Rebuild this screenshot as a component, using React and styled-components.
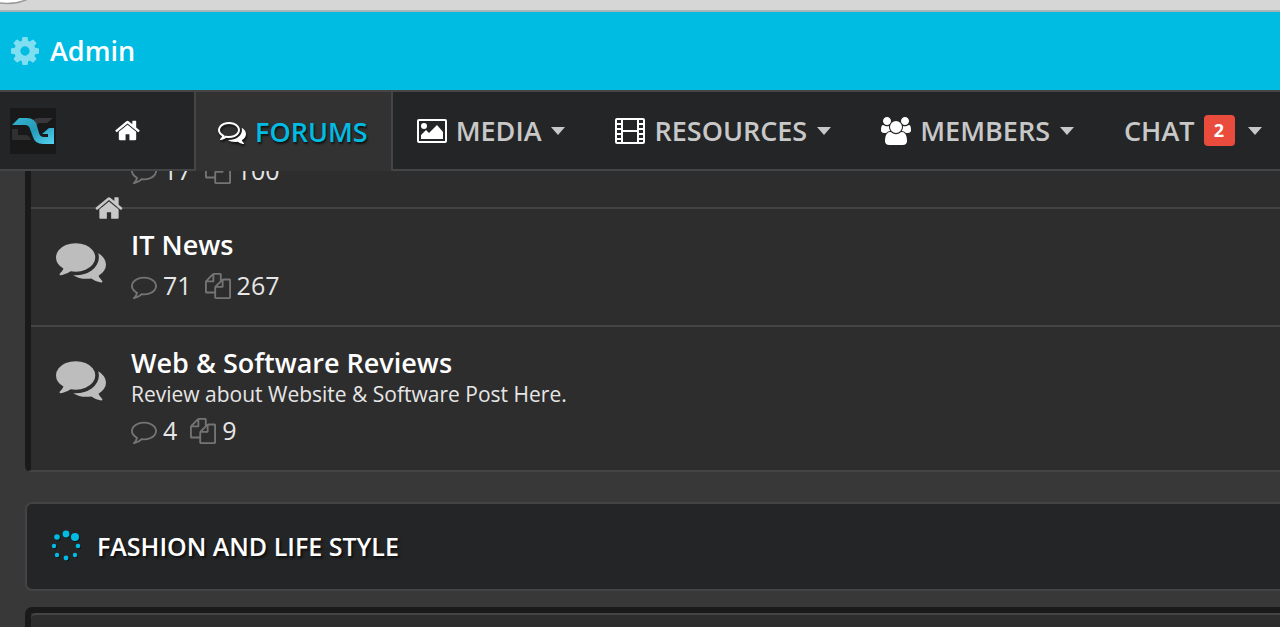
import styled, { createGlobalStyle, css } from "styled-components";

const GlobalStyle = createGlobalStyle`
  * {
    box-sizing: border-box;
  }

  body {
    margin: 0;
    background: #383838;
    color: #e6e6e6;
    font-family: "Open Sans", "Noto Sans", sans-serif;
  }

  a {
    color: inherit;
    text-decoration: none;
  }
`;

const BrowserEdge = styled.div`
  height: 12px;
  overflow: hidden;
  background: #d6d6d6;
  border-bottom: 2px solid #a9b4b7;

  svg {
    display: block;
  }
`;

const AdminBar = styled.header`
  display: flex;
  align-items: center;
  height: 78px;
  padding: 0 11px;
  background: #00bce3;
  color: #fff;
`;

const AdminLink = styled.a`
  display: flex;
  align-items: center;
  gap: 11px;
  font-size: 27px;
  font-weight: 600;
  line-height: 36px;
`;

const Nav = styled.nav`
  display: flex;
  height: 81px;
  background: #242527;
  border-top: 2px solid #454545;
  border-bottom: 2px solid #444546;
  white-space: nowrap;
`;

const LogoLink = styled.a`
  display: flex;
  align-items: center;
  padding: 0 33px 0 10px;
`;

const NavItem = styled.a`
  display: flex;
  align-items: center;
  gap: 9px;
  padding: 0 26px 0 24px;
  color: #c8c8c8;
  font-size: 27px;
  font-weight: 600;

  ${props => props.$home && css`
    padding: 0 53px 0 25px;
  `}

  ${props => props.$active && css`
    margin-bottom: -2px;
    padding: 0 23px 0 22px;
    background: #323232;
    border: solid #444546;
    border-width: 0 2px;
    color: #00bce3;
    text-shadow: 1px 2px 2px #111;

    svg {
      filter: drop-shadow(1px 2px 1px #111);
    }
  `}
`;

const Caret = styled.span`
  margin-left: 1px;
  border: 7px solid transparent;
  border-top: 8px solid #c8c8c8;
  border-bottom: 0;
`;

const ChatBadge = styled.span`
  width: 31px;
  margin-right: 3px;
  border-radius: 4px;
  background: #e94b3c;
  color: #fff;
  font-size: 18px;
  font-weight: 700;
  line-height: 31px;
  text-align: center;
`;

const Icon = styled.svg`
  flex: none;
  width: ${props => props.$width || 28}px;
  height: ${props => props.$height || 28}px;
  fill: ${props => props.$color || "#fff"};
`;

const Content = styled.main`
  position: relative;
  padding-left: 25px;
`;

const Crumb = styled.a`
  position: absolute;
  top: 22px;
  left: 94px;
  display: flex;
`;

const ForumList = styled.section`
  border-left: 6px solid #1a1a1a;
  border-bottom: 2px solid #444;
  border-bottom-left-radius: 6px;
  background: #2d2d2d;
`;

const ForumRow = styled.article`
  display: flex;
  gap: 25px;
  padding: 18px 25px 21px;

  & + & {
    border-top: 2px solid #444;
  }

  ${props => props.$scrolled && css`
    align-items: flex-end;
    height: 35px;
    padding-bottom: 18px;
    padding-left: 100px;
    overflow: hidden;
  `}
`;

const RowIcon = styled.div`
  padding-top: 9px;
`;

const ForumTitle = styled.h3`
  margin: 0;
  color: #fff;
  font-size: 27px;
  font-weight: 600;
  line-height: 36px;
`;

const Description = styled.p`
  margin: 0;
  font-size: 21px;
  line-height: 27px;
`;

const Stats = styled.div`
  display: flex;
  gap: 13px;
  padding-top: 4px;
  font-size: 25px;
  line-height: 37px;
`;

const Stat = styled.span`
  display: flex;
  align-items: center;
  gap: 6px;
`;

const Category = styled.section`
  display: flex;
  align-items: center;
  gap: 16px;
  height: 89px;
  margin: 30px 0 16px;
  padding: 0 24px 2px;
  border: 2px solid #444;
  border-right: 0;
  border-radius: 7px 0 0 7px;
  background: #242527;
`;

const CategoryTitle = styled.h2`
  margin: 0;
  color: #fff;
  font-size: 25px;
  font-weight: 600;
  text-shadow: 2px 2px 2px #111;
`;

const NextList = styled.section`
  border: solid #1a1a1a;
  border-width: 6px 0 0 6px;
  border-top-left-radius: 7px;
  background: #2d2d2d;

  &::before {
    content: "";
    display: block;
    height: 15px;
    border-top: 2px solid #444;
    border-top-left-radius: 5px;
  }
`;

const PATHS = {
  home: "M1472 992v480q0 26-19 45t-45 19h-384v-384h-256v384h-384q-26 0-45-19t-19-45v-480q0-1 .5-3t.5-3l575-474 575 474q1 2 1 6zm223-69l-62 74q-8 9-21 11h-3q-13 0-21-7l-692-577-692 577q-12 8-24 7-13-2-21-11l-62-74q-8-10-7-23.5t11-21.5l719-599q32-26 76-26t76 26l244 204v-195q0-14 9-23t23-9h192q14 0 23 9t9 23v408l219 182q10 8 11 21.5t-7 23.5z",
  cog: "M1152 896q0-106-75-181t-181-75-181 75-75 181 75 181 181 75 181-75 75-181zm512-109v222q0 12-8 23t-20 13l-185 28q-19 54-39 91 35 50 107 138 10 12 10 25t-9 23q-27 37-99 108t-94 71q-12 0-26-9l-138-108q-44 23-91 38-16 136-29 186-7 28-36 28h-222q-14 0-24.5-8.5t-11.5-21.5l-28-184q-49-16-90-37l-141 107q-10 9-25 9-14 0-25-11-126-114-165-168-7-10-7-23 0-12 8-23 15-21 51-66.5t54-70.5q-27-50-41-99l-183-27q-13-2-21-12.5t-8-23.5v-222q0-12 8-23t19-13l186-28q14-46 39-92-40-57-107-138-10-12-10-24 0-10 9-23 26-36 98.5-107.5t94.5-71.5q13 0 26 10l138 107q44-23 91-38 16-136 29-186 7-28 36-28h222q14 0 24.5 8.5t11.5 21.5l28 184q49 16 90 37l142-107q9-9 24-9 13 0 25 10 129 119 165 170 7 8 7 22 0 12-8 23-15 21-51 66.5t-54 70.5q26 50 41 98l183 28q13 2 21 12.5t8 23.5z",
  commentsOutline: "M704 384q-153 0-286 52t-211.5 141-78.5 191q0 82 53 158t149 132l97 56-35 84q34-20 62-39l44-31 53 10q78 14 153 14 153 0 286-52t211.5-141 78.5-191-78.5-191-211.5-141-286-52zm0-128q191 0 353.5 68.5t256.5 186.5 94 257-94 257-256.5 186.5-353.5 68.5q-86 0-176-16-124 88-278 128-36 9-86 16h-3q-11 0-20.5-8t-11.5-21q-1-3-1-6.5t.5-6.5 2-6l2.5-5 3.5-5.5 4-5 4.5-5 4-4.5q5-6 23-25t26-29.5 22.5-29 25-38.5 20.5-44q-124-72-195-177t-71-224q0-139 94-257t256.5-186.5 353.5-68.5zm822 1169q10 24 20.5 44t25 38.5 22.5 29 26 29.5 23 25q1 1 4 4.5t4.5 5 4 5 3.5 5.5l2.5 5 2 6 .5 6.5-1 6.5q-3 14-13 22t-22 7q-50-7-86-16-154-40-278-128-90 16-176 16-271 0-472-132 58 4 88 4 161 0 309-45t264-129q125-92 192-212t67-254q0-77-23-152 129 71 204 178t75 230q0 120-71 224.5t-195 176.5z",
  comments: "M1408 768q0 139-94 257t-256.5 186.5-353.5 68.5q-86 0-176-16-124 88-278 128-36 9-86 16h-3q-11 0-20.5-8t-11.5-21q-1-3-1-6.5t.5-6.5 2-6l2.5-5 3.5-5.5 4-5 4.5-5 4-4.5q5-6 23-25t26-29.5 22.5-29 25-38.5 20.5-44q-124-72-195-177t-71-224q0-139 94-257t256.5-186.5 353.5-68.5 353.5 68.5 256.5 186.5 94 257zm384 256q0 120-71 224.5t-195 176.5q10 24 20.5 44t25 38.5 22.5 29 26 29.5 23 25q1 1 4 4.5t4.5 5 4 5 3.5 5.5l2.5 5 2 6 .5 6.5-1 6.5q-3 14-13 22t-22 7q-50-7-86-16-154-40-278-128-90 16-176 16-271 0-472-132 58 4 88 4 161 0 309-45t264-129q125-92 192-212t67-254q0-77-23-152 129 71 204 178t75 230z",
  comment: "M896 384q-204 0-381.5 69.5t-282 187.5-104.5 255q0 112 71.5 213.5t201.5 175.5l87 50-27 96q-24 91-70 172 152-63 275-171l43-38 57 6q69 8 130 8 204 0 381.5-69.5t282-187.5 104.5-255-104.5-255-282-187.5-381.5-69.5zm896 512q0 174-120 321.5t-326 233-450 85.5q-70 0-145-8-198 175-460 242-49 14-114 22h-5q-15 0-27-10.5t-16-27.5v-1q-3-4-.5-12t2-10 4.5-9.5l6-9 7-8.5 8-9q7-8 31-34.5t34.5-38 31-39.5 32.5-51 27-59 26-76q-157-89-247.5-220t-90.5-281q0-174 120-321.5t326-233 450-85.5 450 85.5 326 233 120 321.5z",
  files: "M1696 384q40 0 68 28t28 68v1216q0 40-28 68t-68 28h-960q-40 0-68-28t-28-68v-288h-544q-40 0-68-28t-28-68v-672q0-40 20-88t48-76l408-408q28-28 76-48t88-20h416q40 0 68 28t28 68v328q68-40 128-40h416zm-544 213l-299 299h299v-299zm-640-384l-299 299h299v-299zm196 647l316-316v-416h-384v416q0 40-28 68t-68 28h-416v640h512v-256q0-40 20-88t48-76zm956 804v-1152h-384v416q0 40-28 68t-68 28h-416v640h896z",
  users: "M593 896q-162 5-265 128h-134q-82 0-138-40.5t-56-118.5q0-353 124-353 6 0 43.5 21t97.5 42.5 119 21.5q67 0 133-23-5 37-5 66 0 139 81 256zm1071 637q0 120-73 189.5t-194 69.5h-874q-121 0-194-69.5t-73-189.5q0-53 3.5-103.5t14-109 26.5-108.5 43-97.5 62-81 85.5-53.5 111.5-20q10 0 43 21.5t73 48 107 48 135 21.5 135-21.5 107-48 73-48 43-21.5q61 0 111.5 20t85.5 53.5 62 81 43 97.5 26.5 108.5 14 109 3.5 103.5zm-1024-1277q0 106-75 181t-181 75-181-75-75-181 75-181 181-75 181 75 75 181zm704 384q0 159-112.5 271.5t-271.5 112.5-271.5-112.5-112.5-271.5 112.5-271.5 271.5-112.5 271.5 112.5 112.5 271.5zm576 225q0 78-56 118.5t-138 40.5h-134q-103-123-265-128 81-117 81-256 0-29-5-66 66 23 133 23 59 0 119-21.5t97.5-42.5 43.5-21q124 0 124 353zm-128-609q0 106-75 181t-181 75-181-75-75-181 75-181 181-75 181 75 75 181z",
};

const VIEW_BOXES = {
  users: "0 0 1920 1792",
  cog: "128 128 1536 1536",
};

function Glyph({ name, size, width, color }) {
  return (
    <Icon
      viewBox={VIEW_BOXES[name] || "0 0 1792 1792"}
      $width={width || size}
      $height={size}
      $color={color}
      aria-hidden="true"
    >
      <path d={PATHS[name]} />
    </Icon>
  );
}

function Logo() {
  return (
    <Icon viewBox="0 0 46 46" $width={46} $height={46} role="img" aria-label="DG">
      <defs>
        <linearGradient id="logoBlue" x1="0" y1="0" x2="1" y2="1">
          <stop offset="0" stopColor="#35b4cf" />
          <stop offset="0.5" stopColor="#249bb9" />
          <stop offset="1" stopColor="#55d3f2" />
        </linearGradient>
      </defs>
      <rect width="46" height="46" fill="#19191a" />
      <path d="M2 21h6v6h8q3 0 5 5H2z" fill="#303031" />
      <path d="M43 10l-6 5h-7q-3 0-4 4l-1-3q-1-3-2-4 2-2 6-2z" fill="#38383a" />
      <path
        d="M2 17l7-7h8q8 0 10 8l2 7q1 4 5 4h4v-3h-6l7-6h5v16H33q-8 0-10-7l-3-8q-1-4-5-4z"
        fill="url(#logoBlue)"
      />
    </Icon>
  );
}

function PictureIcon() {
  return (
    <Icon viewBox="0 0 30 26" $width={30} $height={26} aria-hidden="true">
      <path fillRule="evenodd" d="M2 1h26q2 0 2 2v20q0 2-2 2H2q-2 0-2-2V3q0-2 2-2zm0 2v20h26V3z" />
      <circle cx="7" cy="8" r="3" />
      <path d="M4 21v-4l5-5 3 3 8-8 6 7v7z" />
    </Icon>
  );
}

function FilmIcon() {
  return (
    <Icon viewBox="0 0 30 28" $width={30} $height={28} aria-hidden="true">
      <path
        fillRule="evenodd"
        d="M2 1h26q2 0 2 2v22q0 2-2 2H2q-2 0-2-2V3q0-2 2-2zM8 3v10h14V3zM8 15v10h14V15zM2 3v3h4V3zM2 8v3h4V8zM2 13v3h4v-3zM2 18v3h4v-3zM2 23v2h4v-2zM24 3v3h4V3zM24 8v3h4V8zM24 13v3h4v-3zM24 18v3h4v-3zM24 23v2h4v-2z"
      />
    </Icon>
  );
}

const DOTS = [
  [15, 4, 3.4],
  [24, 7, 4],
  [27, 16, 2.3],
  [24, 25, 2.2],
  [15, 28, 2.4],
  [6, 25, 2.2],
  [3, 16, 2.2],
  [6, 7, 2.8],
];

function DotsIcon() {
  return (
    <Icon viewBox="0 0 30 32" $width={30} $height={32} $color="#00bce3" aria-hidden="true">
      {DOTS.map(([x, y, r]) => (
        <circle key={`shadow-${x}-${y}`} cx={x + 1} cy={y + 1} r={r} fill="#121314" />
      ))}
      {DOTS.map(([x, y, r]) => (
        <circle key={`${x}-${y}`} cx={x} cy={y} r={r} />
      ))}
    </Icon>
  );
}

function ForumStats({ threads, posts }) {
  return (
    <Stats>
      <Stat>
        <Glyph name="comment" size={26} color="#747474" />
        {threads}
      </Stat>
      <Stat>
        <Glyph name="files" size={26} color="#747474" />
        {posts}
      </Stat>
    </Stats>
  );
}

const forums = [
  { title: "IT News", threads: 71, posts: 267 },
  {
    title: "Web & Software Reviews",
    description: "Review about Website & Software Post Here.",
    threads: 4,
    posts: 9,
  },
];

export default function App() {
  return (
    <>
      <GlobalStyle />
      <BrowserEdge>
        <Icon viewBox="0 0 40 10" $width={40} $height={10} aria-hidden="true">
          <path d="M-1 3Q16 5 28-1H-1z" stroke="#999" strokeWidth="1.5" />
        </Icon>
      </BrowserEdge>
      <AdminBar>
        <AdminLink href="#admin">
          <Glyph name="cog" size={28} color="#80def1" />
          Admin
        </AdminLink>
      </AdminBar>
      <Nav>
        <LogoLink href="#top">
          <Logo />
        </LogoLink>
        <NavItem href="#home" aria-label="Home" $home>
          <Glyph name="home" size={27} />
        </NavItem>
        <NavItem href="#forums" $active>
          <Glyph name="commentsOutline" size={28} />
          FORUMS
        </NavItem>
        <NavItem href="#media">
          <PictureIcon />
          MEDIA
          <Caret />
        </NavItem>
        <NavItem href="#resources">
          <FilmIcon />
          RESOURCES
          <Caret />
        </NavItem>
        <NavItem href="#members">
          <Glyph name="users" size={28} width={30} />
          MEMBERS
          <Caret />
        </NavItem>
        <NavItem href="#chat">
          CHAT
          <ChatBadge>2</ChatBadge>
          <Caret />
        </NavItem>
      </Nav>
      <Content>
        <ForumList>
          <ForumRow $scrolled>
            <ForumStats threads={17} posts={100} />
          </ForumRow>
          {forums.map((forum) => (
            <ForumRow key={forum.title}>
              <RowIcon>
                <Glyph name="comments" size={50} color="#bdbdbd" />
              </RowIcon>
              <div>
                <ForumTitle>
                  <a href="#forum">{forum.title}</a>
                </ForumTitle>
                {forum.description && <Description>{forum.description}</Description>}
                <ForumStats threads={forum.threads} posts={forum.posts} />
              </div>
            </ForumRow>
          ))}
        </ForumList>
        <Category>
          <DotsIcon />
          <CategoryTitle>FASHION AND LIFE STYLE</CategoryTitle>
        </Category>
        <NextList />
        <Crumb href="#home" aria-label="Home">
          <Glyph name="home" size={30} color="#c8c8c8" />
        </Crumb>
      </Content>
    </>
  );
}
